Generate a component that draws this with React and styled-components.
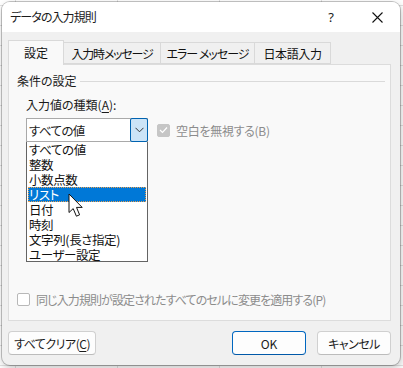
import React from "react";
import styled, { createGlobalStyle } from "styled-components";

const Global = createGlobalStyle`
  html, body { margin: 0; padding: 0; }
  body {
    width: 403px; height: 368px; overflow: hidden;
    font-family: "Noto Sans CJK JP", "Noto Sans", sans-serif;
    background-color: #ffffff;
    background-image:
      linear-gradient(to right, #e2e2e2 1px, transparent 1px),
      linear-gradient(to bottom, #e2e2e2 1px, transparent 1px);
    background-size: 102px 20px, 102px 20px;
    background-position: 15px 0, 0 5px;
  }
`;

const Page = styled.div`
  padding: 2px 3px 3px 2px;
  width: 403px;
  height: 368px;
  box-sizing: border-box;
`;

const Dialog = styled.div`
  width: 398px;
  height: 363px;
  border-radius: 8px;
  overflow: hidden;
  background: #f0f0f0;
  box-shadow: 0 0 0 1px rgba(0,0,0,0.22), 1px 3px 8px rgba(0,0,0,0.25);
  display: flex;
  flex-direction: column;
  font-family: "Noto Sans CJK JP", "Noto Sans", sans-serif;
  font-feature-settings: "palt" 1;
  font-kerning: normal;
  font-size: 12px;
  color: #1b1b1b;
`;

const Kana = styled.span`
  letter-spacing: ${p => p.$ls ?? -0.6}px;
`;

const TitleBar = styled.div`
  height: 30px;
  background: #ffffff;
  display: flex;
  align-items: center;
  padding-left: 8px;
  flex-shrink: 0;
`;

const Title = styled.div`
  flex: 1;
  font-size: 12px;
  line-height: 16px;
  margin-top: -1px;
`;

const TitleButton = styled.div`
  width: ${p => p.$w}px;
  height: 30px;
  display: flex;
  align-items: center;
  justify-content: center;
  font-family: "Noto Sans", sans-serif;
  font-size: 13px;
`;

const Body = styled.div`
  flex: 1;
  display: flex;
  flex-direction: column;
  padding: 8px 9px 0 6px;
`;

const TabRow = styled.div`
  display: flex;
  align-items: flex-end;
  height: 24px;
  position: relative;
  z-index: 1;
`;

const Tab = styled.div`
  box-sizing: border-box;
  width: ${p => p.$w}px;
  height: ${p => (p.$active ? 25 : 22)}px;
  margin-bottom: ${p => (p.$active ? -1 : 0)}px;
  border: 1px solid #d9d9d9;
  border-bottom: ${p => (p.$active ? "none" : "1px solid #d9d9d9")};
  margin-left: ${p => (p.$first ? 0 : -1)}px;
  background: ${p => (p.$active ? "#f9f9f9" : "#f0f0f0")};
  display: flex;
  align-items: center;
  justify-content: center;
  padding-bottom: ${p => (p.$active ? 1 : 0)}px;
  font-size: 12px;
  white-space: nowrap;
  color: #111;
`;

const Panel = styled.div`
  box-sizing: border-box;
  height: 257px;
  background: #f9f9f9;
  border: 1px solid #dcdcdc;
  display: flex;
  flex-direction: column;
  padding: 7px 5px 12px 8px;
`;

const GroupHeader = styled.div`
  display: flex;
  align-items: center;
  height: 16px;
  gap: 3px;
`;

const GroupLine = styled.div`
  flex: 1;
  height: 1px;
  background: #dadada;
  margin-top: 2px;
`;

const FieldLabel = styled.div`
  margin: 9px 0 0 9px;
  height: 16px;
  line-height: 16px;
`;

const U = styled.span`
  text-decoration: underline;
  text-underline-offset: 2px;
`;

const ComboRow = styled.div`
  margin: 5px 0 0 9px;
  display: flex;
  align-items: center;
  gap: 9px;
`;

const ComboWrap = styled.div`
  position: relative;
  width: 122px;
  height: 24px;
`;

const Combo = styled.div`
  box-sizing: border-box;
  width: 122px;
  height: 24px;
  background: #fff;
  border: 1px solid #a9a9a9;
  display: flex;
  align-items: center;
  padding-left: 2px;
  position: relative;
`;

const ComboText = styled.div`
  flex: 1;
  font-size: 12.5px;
  letter-spacing: -0.6px;
`;

const ComboButton = styled.div`
  box-sizing: border-box;
  width: 18px;
  height: 24px;
  margin: -1px -1px -1px 0;
  background: #cce4f7;
  border: 1px solid #0063b1;
  border-radius: 2px;
  display: flex;
  align-items: center;
  justify-content: center;
`;

const List = styled.div`
  position: absolute;
  top: 24px;
  left: 0;
  width: 122px;
  height: 120px;
  box-sizing: border-box;
  border: 1px solid #646464;
  border-top: none;
  background: #fff;
  z-index: 5;
  padding: 0 0 0 1px;
`;

const Item = styled.div`
  height: 15px;
  line-height: 15px;
  padding-left: 1px;
  margin-right: 1px;
  font-size: 12.5px;
  letter-spacing: -0.4px;
  white-space: nowrap;
  background: ${p => (p.$sel ? "#0078d7" : "transparent")};
  color: ${p => (p.$sel ? "#ffffff" : "#111")};
  outline: ${p => (p.$sel ? "1px dotted #e8a050" : "none")};
  outline-offset: -1px;
`;

const Cursor = styled.svg`
  position: absolute;
  left: 41px;
  top: 51px;
  z-index: 6;
`;

const CheckRow = styled.label`
  display: flex;
  align-items: center;
  gap: 6px;
  color: #8c8c8c;
  white-space: nowrap;
  margin: ${p => p.$m || 0};
`;

const Box = styled.div`
  box-sizing: border-box;
  width: 13px;
  height: 13px;
  border-radius: 2px;
  background: ${p => (p.$checked ? "#c6c6c6" : "#ffffff")};
  border: 1px solid ${p => (p.$checked ? "#c6c6c6" : "#b8b8b8")};
  display: flex;
  align-items: center;
  justify-content: center;
`;

const Footer = styled.div`
  display: flex;
  align-items: center;
  padding: 10px 0 10px 0;
  gap: 11px;
`;

const Button = styled.div`
  box-sizing: border-box;
  height: 24px;
  width: ${p => p.$w}px;
  background: #fdfdfd;
  border: 1px solid ${p => (p.$primary ? "#0067c0" : "#d0d0d0")};
  border-bottom-color: ${p => (p.$primary ? "#0058a8" : "#bcbcbc")};
  border-radius: 4px;
  display: flex;
  align-items: center;
  justify-content: center;
  font-size: 12px;
  margin-left: ${p => (p.$auto ? "auto" : "0")};
  padding-top: 1px;
`;

const items = ["すべての値", "整数", "小数点数", "リスト", "日付", "時刻", "文字列(長さ指定)", "ユーザー設定"];

export default function App() {
  return (
    <>
      <Global />
      <Page>
        <Dialog>
          <TitleBar>
            <Title><Kana $ls={-0.9}>データの入力規則</Kana></Title>
            <TitleButton $w={46}>?</TitleButton>
            <TitleButton $w={46}>
              <svg width="11" height="11" viewBox="0 0 11 11">
                <path d="M0.5 0.5 L10.5 10.5 M10.5 0.5 L0.5 10.5" stroke="#111" strokeWidth="1.1" />
              </svg>
            </TitleButton>
          </TitleBar>
          <Body>
            <TabRow>
              <Tab $w={56} $active $first>設定</Tab>
              <Tab $w={98}><Kana $ls={-1.2}>入力時メッセージ</Kana></Tab>
              <Tab $w={95}><Kana $ls={-1}>エラー メッセージ</Kana></Tab>
              <Tab $w={77}><Kana $ls={-0.4}>日本語入力</Kana></Tab>
            </TabRow>
            <Panel>
              <GroupHeader>
                <span>条件の設定</span>
                <GroupLine />
              </GroupHeader>
              <FieldLabel>
                入力値の種類(<U>A</U>):
              </FieldLabel>
              <ComboRow>
                <ComboWrap>
                  <Combo>
                    <ComboText>すべての値</ComboText>
                    <ComboButton>
                      <svg width="9" height="6" viewBox="0 0 9 6">
                        <path d="M0.5 0.8 L4.5 4.8 L8.5 0.8" fill="none" stroke="#333" strokeWidth="1" />
                      </svg>
                    </ComboButton>
                  </Combo>
                  <List>
                    {items.map((t, i) => (
                      <Item key={t} $sel={i === 3}>{t}</Item>
                    ))}
                    <Cursor width="19" height="26" viewBox="0 0 19 26">
                      <path
                        d="M1 1 L1 19.5 L5.2 15.6 L8.4 23.2 L11.6 21.8 L8.5 14.4 L14.2 14.4 Z"
                        fill="#fff"
                        stroke="#111"
                        strokeWidth="1"
                        strokeLinejoin="round"
                      />
                    </Cursor>
                  </List>
                </ComboWrap>
                <CheckRow>
                  <Box $checked>
                    <svg width="9" height="8" viewBox="0 0 9 8">
                      <path d="M1 4 L3.5 6.5 L8 1.5" fill="none" stroke="#fff" strokeWidth="1.2" />
                    </svg>
                  </Box>
                  <Kana $ls={-0.3}>空白を無視する(B)</Kana>
                </CheckRow>
              </ComboRow>
              <CheckRow $m="auto 0 0 0">
                <Box />
                <Kana $ls={-0.9}>同じ入力規則が設定されたすべてのセルに変更を適用する(P)</Kana>
              </CheckRow>
            </Panel>
            <Footer>
              <Button $w={88}><Kana $ls={-0.5}>すべてクリア(<U>C</U>)</Kana></Button>
              <Button $w={74} $primary $auto>OK</Button>
              <Button $w={74}><Kana $ls={-0.5}>キャンセル</Kana></Button>
            </Footer>
          </Body>
        </Dialog>
      </Page>
    </>
  );
}
